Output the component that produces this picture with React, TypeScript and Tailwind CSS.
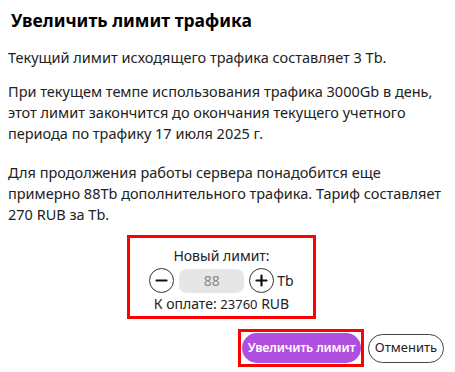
import React, { useState } from "react";

export default function App() {
  const [limit] = useState(88);

  return (
    <div className="w-[455px] h-[372px] bg-white text-[#222] font-['Noto_Sans',sans-serif] overflow-hidden">
      <div className="pl-2 pr-[11px] pt-[7px]">
        <div className="w-[434px]">
          <h1 className="pl-[3px] text-[17.5px] font-bold leading-[26px] text-black">Увеличить лимит трафика</h1>

          <p className="mt-[14px] text-[14.5px] leading-[21px]">Текущий лимит исходящего трафика составляет 3 Tb.</p>

          <p className="mt-[13px] text-[14.5px] leading-[21px]">
            При текущем темпе использования трафика 3000Gb в день, этот лимит закончится до окончания текущего учетного периода по трафику 17 июля 2025 г.
          </p>

          <p className="mt-[18px] text-[14.5px] leading-[21px]">
            Для продолжения работы сервера понадобится еще примерно 88Tb дополнительного трафика. Тариф составляет 270 RUB за Tb.
          </p>
        </div>

        <div className="flex justify-center mt-[10px] pr-[9px]">
          <div className="border-[3px] border-[#ff0000] w-[189px] h-[84px] flex flex-col items-center pt-[8px] text-[14px] leading-[20px]">
            <div>Новый лимит:</div>
            <div className="flex items-center gap-[5px] mt-[2px]">
              <button className="w-[25px] h-[25px] rounded-full border border-[#333] flex items-center justify-center">
                <svg width="13" height="13" viewBox="0 0 13 13"><path d="M1.5 6.5h10" stroke="#111" strokeWidth="2.2" strokeLinecap="round" /></svg>
              </button>
              <div className="w-[65px] h-[24px] rounded-[8px] bg-[#e6e6e6] text-center text-[#888] leading-[24px]">{limit}</div>
              <button className="w-[25px] h-[25px] rounded-full border border-[#333] flex items-center justify-center">
                <svg width="13" height="13" viewBox="0 0 13 13"><path d="M1.5 6.5h10M6.5 1.5v10" stroke="#111" strokeWidth="2.2" strokeLinecap="round" /></svg>
              </button>
              <span className="-ml-[2px]">Tb</span>
            </div>
            <div className="mt-[1px]">К оплате: <span className="text-[13px]">23760</span> RUB</div>
          </div>
        </div>

        <div className="flex justify-end items-center gap-[4px] mt-[10px]">
          <div className="border-[3px] border-[#ff0000] pl-px py-px">
            <button className="w-[119px] h-[30px] rounded-full bg-[#b04ee0] text-white font-semibold text-[12.5px] tracking-[-0.2px]">Увеличить лимит</button>
          </div>
          <button className="w-[76px] h-[29px] rounded-full border border-[#444] text-[13px] bg-white">Отменить</button>
        </div>
      </div>
    </div>
  );
}
